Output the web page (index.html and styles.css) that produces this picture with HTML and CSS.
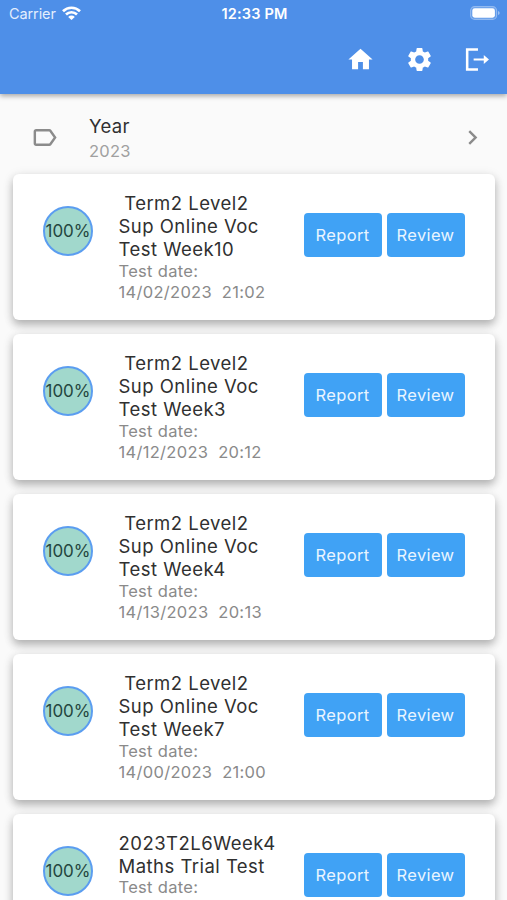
FILE: index.html
```html
<!DOCTYPE html>
<html lang="en">
<head>
<meta charset="utf-8">
<title>Test results</title>
<link rel="stylesheet" href="styles.css">
</head>
<body>
<header class="appbar">
  <div class="status">
    <div class="carrier"><span>Carrier</span>
      <svg class="wifi" viewBox="0 0 19 14"><g fill="none" stroke="#fff" stroke-width="2.7"><path d="M1 5.2a12.2 12.2 0 0 1 17 0"/><path d="M4 8.5a7.9 7.9 0 0 1 11 0"/></g><path fill="#fff" d="M9.5 14 6.2 10.9a4.6 4.6 0 0 1 6.6 0z"/></svg>
    </div>
    <div class="clock">12:33 PM</div>
    <svg class="battery" viewBox="0 0 30 14"><rect x=".6" y=".6" width="26" height="12.8" rx="4" fill="#fff" fill-opacity=".12" stroke="#fff" stroke-opacity=".35" stroke-width="1.1"/><rect x="2.3" y="2.3" width="22.6" height="9.4" rx="2.4" fill="#fff"/><path d="M28 5v4q1.7-.6 1.7-2T28 5z" fill="#fff" fill-opacity=".45"/></svg>
  </div>
  <nav class="actions">
    <svg class="icon" viewBox="0 0 24 24"><path d="M10 20v-6h4v6h5v-8h3L12 3 2 12h3v8z"/></svg>
    <svg class="icon" viewBox="0 0 24 24"><path d="M19.14 12.94c.04-.3.06-.61.06-.94 0-.32-.02-.64-.07-.94l2.03-1.58c.18-.14.23-.41.12-.61l-1.92-3.32c-.12-.22-.37-.29-.59-.22l-2.39.96c-.5-.38-1.03-.7-1.62-.94l-.36-2.54c-.04-.24-.24-.41-.48-.41h-3.84c-.24 0-.43.17-.47.41l-.36 2.54c-.59.24-1.13.57-1.62.94l-2.39-.96c-.22-.08-.47 0-.59.22L2.74 8.87c-.12.21-.08.47.12.61l2.03 1.58c-.05.3-.09.63-.09.94s.02.64.07.94l-2.03 1.58c-.18.14-.23.41-.12.61l1.92 3.32c.12.22.37.29.59.22l2.39-.96c.5.38 1.03.7 1.62.94l.36 2.54c.05.24.24.41.48.41h3.84c.24 0 .44-.17.47-.41l.36-2.54c.59-.24 1.13-.56 1.62-.94l2.39.96c.22.08.47 0 .59-.22l1.92-3.32c.12-.22.07-.47-.12-.61l-2.01-1.58zM12 15.6c-1.98 0-3.6-1.62-3.6-3.6s1.62-3.6 3.6-3.6 3.6 1.62 3.6 3.6-1.62 3.6-3.6 3.6z"/></svg>
    <svg class="icon" viewBox="0 0 24 24"><path d="M2.4 2.6h10v2.1H4.5v14.6h7.9v2.1h-10zM8.8 11.1h8.4V8.2l4.3 3.8-4.3 3.8v-2.9H8.8z"/></svg>
  </nav>
</header>
<main>
  <section class="year">
    <svg class="icon" viewBox="0 0 24 24"><path d="M17.63 5.84C17.27 5.33 16.67 5 16 5L5 5.01C3.9 5.01 3 5.9 3 7v10c0 1.1.9 1.99 2 1.99L16 19c.67 0 1.27-.33 1.63-.84L22 12l-4.37-6.16zM16 17H5V7h11l3.55 5L16 17z"/></svg>
    <div class="year-text"><div class="year-label">Year</div><div class="year-value">2023</div></div>
    <svg class="icon" viewBox="0 0 24 24"><path d="M10 6 8.59 7.41 13.17 12l-4.58 4.59L10 18l6-6z"/></svg>
  </section>
  <article class="card">
    <div class="score">100%</div>
    <div class="info"><h2>&nbsp;Term2 Level2<br>Sup Online Voc<br>Test Week10</h2><p>Test date:<br>14/02/2023&nbsp; 21:02</p></div>
    <div class="buttons"><button>Report</button><button>Review</button></div>
  </article>
  <article class="card">
    <div class="score">100%</div>
    <div class="info"><h2>&nbsp;Term2 Level2<br>Sup Online Voc<br>Test Week3</h2><p>Test date:<br>14/12/2023&nbsp; 20:12</p></div>
    <div class="buttons"><button>Report</button><button>Review</button></div>
  </article>
  <article class="card">
    <div class="score">100%</div>
    <div class="info"><h2>&nbsp;Term2 Level2<br>Sup Online Voc<br>Test Week4</h2><p>Test date:<br>14/13/2023&nbsp; 20:13</p></div>
    <div class="buttons"><button>Report</button><button>Review</button></div>
  </article>
  <article class="card">
    <div class="score">100%</div>
    <div class="info"><h2>&nbsp;Term2 Level2<br>Sup Online Voc<br>Test Week7</h2><p>Test date:<br>14/00/2023&nbsp; 21:00</p></div>
    <div class="buttons"><button>Report</button><button>Review</button></div>
  </article>
  <article class="card">
    <div class="score">100%</div>
    <div class="info"><h2>2023T2L6Week4<br>Maths Trial Test</h2><p>Test date:</p></div>
    <div class="buttons"><button>Report</button><button>Review</button></div>
  </article>
</main>
</body>
</html>
```
FILE: styles.css
```css
* { box-sizing: border-box; }
body {
  margin: 0;
  height: 900px;
  overflow: hidden;
  display: flex;
  flex-direction: column;
  background: #fafafa;
  font-family: Inter, "Liberation Sans", sans-serif;
  color: #303030;
}
main { flex: 1; min-height: 0; overflow: hidden; }
.appbar {
  flex: none;
  position: relative;
  height: 94px;
  background: #4e8fe8;
  color: #fff;
  box-shadow: 0 2px 5px rgba(0, 0, 0, .34);
}
.status {
  display: grid;
  grid-template-columns: 1fr auto 1fr;
  align-items: center;
  height: 27px;
  padding: 0 7px 0 9px;
}
.carrier {
  display: flex;
  align-items: center;
  gap: 6px;
  font-size: 14.5px;
  letter-spacing: -.1px;
  color: #e3eefd;
}
.wifi { width: 19px; height: 14px; margin-top: -1px; }
.clock { font-size: 14.5px; font-weight: 600; letter-spacing: .18px; }
.battery { width: 30px; height: 14px; justify-self: end; margin-top: -1px; }
.icon { width: 29px; height: 29px; flex: none; fill: currentColor; }
.actions {
  display: flex;
  justify-content: flex-end;
  gap: 29.5px;
  padding: 18px 15px 0 0;
}
.year {
  display: flex;
  align-items: center;
  height: 80px;
  padding: 7px 20px 0 30px;
  color: #8b8b8b;
}
.year-text { flex: 1; margin: 2px 0 0 30px; }
.year-label { font-size: 18.5px; line-height: 25px; letter-spacing: .3px; color: #303030; }
.year-value { font-size: 16.5px; line-height: 25px; letter-spacing: .25px; color: #a0a0a0; }
.card {
  display: flex;
  align-items: flex-start;
  width: 482px;
  height: 146px;
  margin: 0 0 14px 13px;
  padding: 18px 30px 0 30px;
  background: #fff;
  border-radius: 6px;
  box-shadow: 0 5px 8px rgba(0, 0, 0, .24), 0 2px 12px rgba(0, 0, 0, .1);
}
.score {
  display: flex;
  align-items: center;
  justify-content: center;
  width: 50px;
  height: 50px;
  margin-top: 13.5px;
  border: 2px solid #5b9df0;
  border-radius: 50%;
  background: #a1d8cc;
  color: #24463f;
  font-size: 17px;
}
.info { flex: 1; margin-left: 25.5px; white-space: nowrap; }
h2 { margin: 0; font-size: 18.5px; font-weight: 400; line-height: 23.2px; letter-spacing: .47px; }
p { margin: -1px 0 0; font-size: 16.5px; line-height: 21px; letter-spacing: .3px; color: #8a8a8a; }
.buttons { display: flex; gap: 5px; margin-top: 21px; }
button {
  width: 78px;
  height: 44px;
  padding: 0 1px 0 0;
  border: 0;
  border-radius: 4px;
  background: #40a2f5;
  color: #e9f5ff;
  font: 400 16.5px Inter, "Liberation Sans", sans-serif;
  letter-spacing: .35px;
}
```
